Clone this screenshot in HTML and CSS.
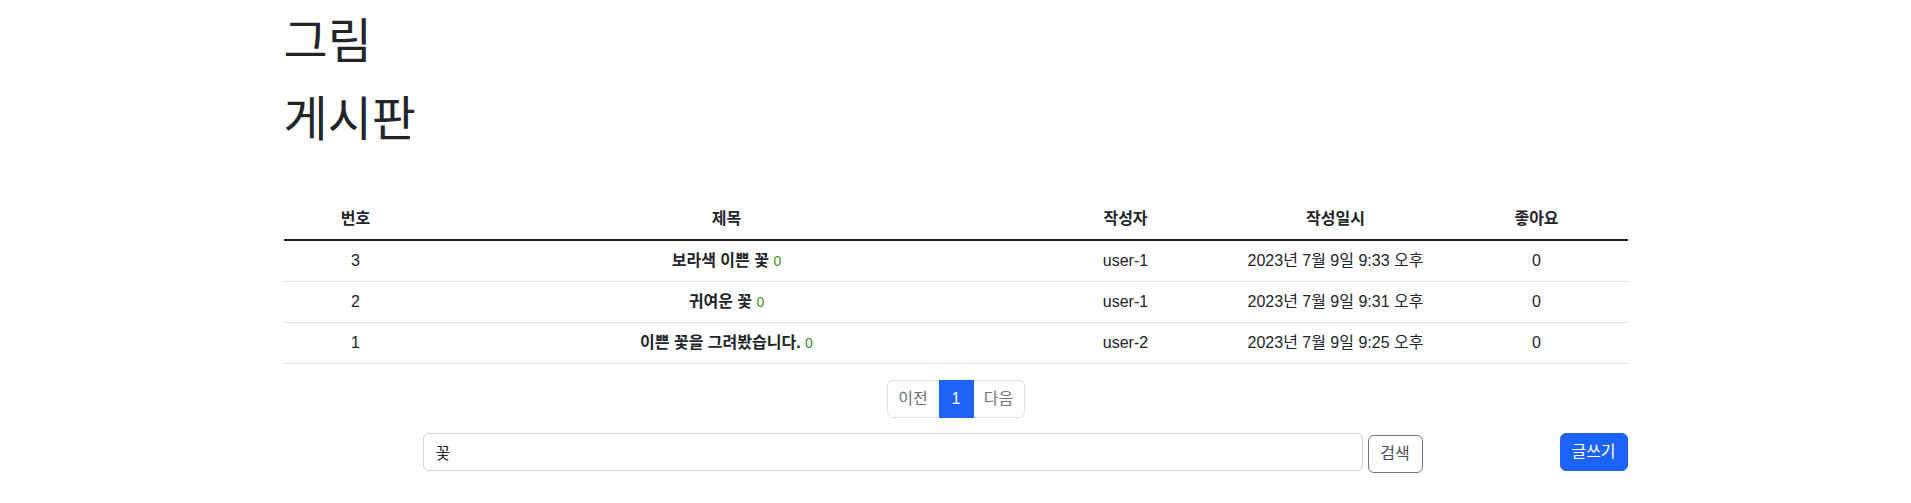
FILE: index.html
```html
<!DOCTYPE html>
<html lang="ko">
<head>
<meta charset="utf-8">
<title>그림 게시판</title>
<link rel="stylesheet" href="styles.css">
</head>
<body>
<div class="container">
  <header class="page-head">
    <h1 class="title">그림</h1>
    <h1 class="title title-last">게시판</h1>
  </header>

  <table class="board">
    <colgroup>
      <col class="c-no">
      <col class="c-title">
      <col class="c-writer">
      <col class="c-date">
      <col class="c-like">
    </colgroup>
    <thead>
      <tr>
        <th>번호</th>
        <th>제목</th>
        <th>작성자</th>
        <th>작성일시</th>
        <th>좋아요</th>
      </tr>
    </thead>
    <tbody>
      <tr>
        <td>3</td>
        <td><span class="post-title">보라색 이쁜 꽃</span> <span class="cmt">0</span></td>
        <td>user-1</td>
        <td>2023년 7월 9일 9:33 오후</td>
        <td>0</td>
      </tr>
      <tr>
        <td>2</td>
        <td><span class="post-title">귀여운 꽃</span> <span class="cmt">0</span></td>
        <td>user-1</td>
        <td>2023년 7월 9일 9:31 오후</td>
        <td>0</td>
      </tr>
      <tr>
        <td>1</td>
        <td><span class="post-title">이쁜 꽃을 그려봤습니다.</span> <span class="cmt">0</span></td>
        <td>user-2</td>
        <td>2023년 7월 9일 9:25 오후</td>
        <td>0</td>
      </tr>
    </tbody>
  </table>

  <nav class="pager">
    <ul class="pagination">
      <li class="page-link disabled prev">이전</li>
      <li class="page-link active num">1</li>
      <li class="page-link disabled next">다음</li>
    </ul>
  </nav>

  <div class="toolbar">
    <form class="search">
      <input class="search-input" type="text" value="꽃">
      <button class="btn btn-outline" type="button">검색</button>
    </form>
    <button class="btn btn-primary write" type="button">글쓰기</button>
  </div>
</div>
</body>
</html>
```

FILE: styles.css
```css
* { box-sizing: border-box; }

body {
  margin: 0;
  font-family: "Liberation Sans", "Noto Sans CJK KR", sans-serif;
  font-size: 16px;
  line-height: 24px;
  color: #212529;
  background: #fff;
}

.container {
  width: 1344px;
  margin: 0 auto;
}

.page-head {
  margin-bottom: 46px;
}

.title {
  margin: 0 0 3px 0;
  font-family: "Noto Sans CJK KR", sans-serif;
  font-size: 48px;
  font-weight: 400;
  line-height: 75px;
  color: #212529;
}

.title-last {
  margin-bottom: 0;
}

.board {
  width: 100%;
  border-collapse: collapse;
  table-layout: fixed;
  margin-bottom: 16px;
}

.c-no { width: 144px; }
.c-title { width: 598px; }
.c-writer { width: 200px; }
.c-date { width: 220px; }
.c-like { width: 182px; }

.board th,
.board td {
  padding: 8px;
  text-align: center;
  line-height: 24px;
  white-space: nowrap;
}

.board th {
  font-weight: 700;
  border-bottom: 2px solid #212529;
}

.board td {
  border-bottom: 1px solid #dee2e6;
}

.post-title {
  font-weight: 700;
}

.cmt {
  font-size: 14px;
  color: #3f8a35;
}

.pager {
  display: flex;
  justify-content: center;
  margin-bottom: 15px;
}

.pagination {
  display: flex;
  list-style: none;
  margin: 0;
  padding: 0;
}

.page-link {
  height: 38px;
  padding: 6px 0;
  text-align: center;
  line-height: 24px;
  border: 1px solid #dee2e6;
  background: #fff;
  color: #6c757d;
}

.page-link + .page-link { margin-left: -1px; }

.prev { width: 53px; border-radius: 6px 0 0 6px; }
.num { width: 35px; }
.next { width: 52px; border-radius: 0 6px 6px 0; }

.page-link.active {
  background: #1d63f8;
  border-color: #1d63f8;
  color: #fff;
  position: relative;
  z-index: 1;
}

.toolbar {
  display: flex;
  align-items: flex-start;
  padding-left: 139px;
}

.search {
  display: flex;
  align-items: flex-start;
  margin: 0;
}

.search-input {
  width: 940px;
  height: 38px;
  padding: 6px 12px;
  font-family: "Liberation Sans", "Noto Sans CJK KR", sans-serif;
  font-size: 16px;
  color: #212529;
  border: 1px solid #ced4da;
  border-radius: 6px;
  background: #fff;
  outline: none;
}

.btn {
  height: 38px;
  padding: 6px 0;
  font-family: "Liberation Sans", "Noto Sans CJK KR", sans-serif;
  font-size: 16px;
  line-height: 24px;
  border-radius: 6px;
  cursor: pointer;
}

.btn-outline {
  width: 55px;
  margin-left: 5px;
  margin-top: 2px;
  background: #fff;
  color: #495057;
  border: 1px solid #6c757d;
}

.btn-primary {
  width: 68px;
  background: #1d63f8;
  color: #fff;
  border: 1px solid #1d63f8;
}

.write {
  margin-left: auto;
}
```
